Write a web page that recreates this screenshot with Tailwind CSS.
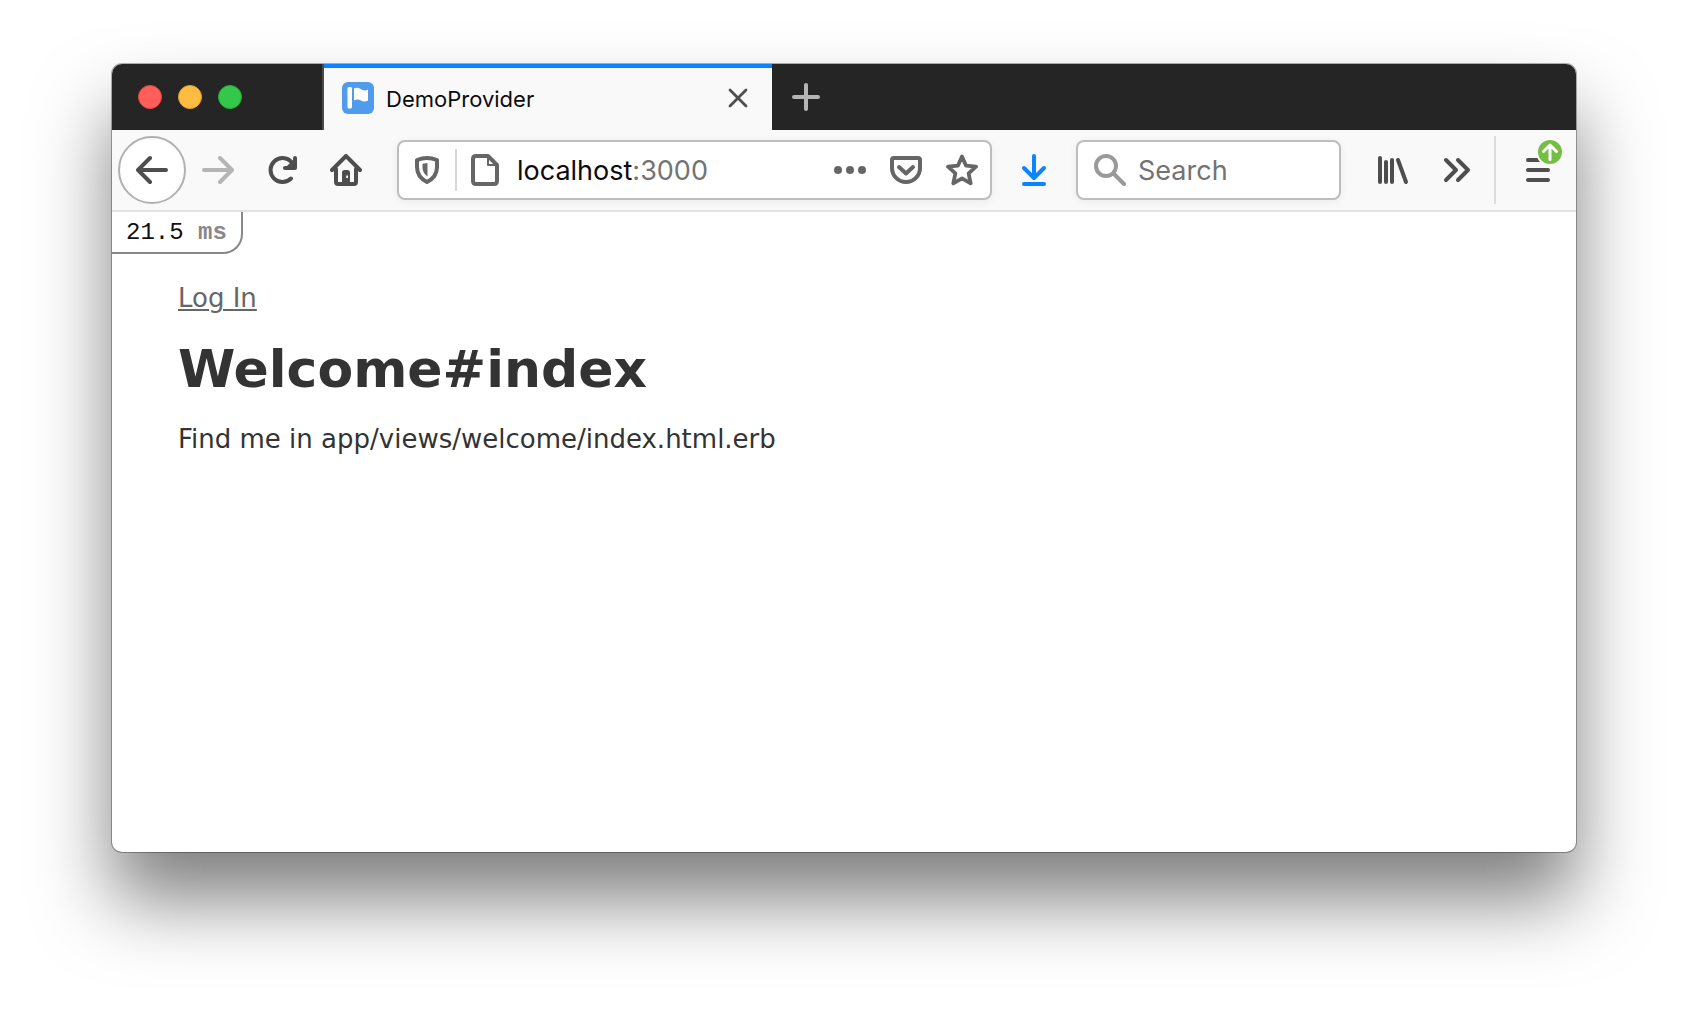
<!DOCTYPE html>
<html lang="en">
<head>
<meta charset="utf-8">
<title>DemoProvider</title>
<script src="https://cdn.jsdelivr.net/npm/@tailwindcss/browser@4"></script>
</head>
<body class="flex min-h-screen flex-col bg-white px-28 pt-16 pb-40 font-['Inter',sans-serif]">
<div class="flex flex-1 flex-col overflow-hidden rounded-[10px] bg-white shadow-[0_0_0_1px_rgba(0,0,0,0.3),0_48px_76px_rgba(0,0,0,0.5)]">

  <!-- Tab strip -->
  <header class="flex h-[66px] shrink-0 bg-[#252525]">
    <div class="flex w-[212px] items-center gap-4 border-r-2 border-[#4a4a4a] pl-[26px]">
      <button aria-label="Close window" class="size-6 rounded-full border border-[#e2443f] bg-[#fe5f5a]"></button>
      <button aria-label="Minimize window" class="size-6 rounded-full border border-[#dfa032] bg-[#febc40]"></button>
      <button aria-label="Zoom window" class="size-6 rounded-full border border-[#27aa35] bg-[#34c84a]"></button>
    </div>
    <div class="flex w-md items-center border-t-4 border-[#0a84ff] bg-[#f9f9fa] pr-4 pb-0.5 pl-[18px]">
      <svg class="size-8 shrink-0" viewBox="0 0 32 32" aria-hidden="true">
        <rect width="32" height="32" rx="6" fill="#509bec"/>
        <rect x="5.5" y="5" width="4.500" height="21.500" rx="1.500" fill="#fff"/>
        <path d="M12 6.500C15 5 17 6 19.500 7.500S24 8.500 26 7.500V18.500C23 20 21 19.500 18.500 18.200S14 17.500 12 18.500Z" fill="#fff"/>
      </svg>
      <span class="ml-3 flex-1 pt-0.5 text-[22px] leading-8 text-[#0c0c0d]">DemoProvider</span>
      <button aria-label="Close tab" class="flex size-9 items-center justify-center">
        <svg class="size-6" viewBox="0 0 24 24" fill="none" stroke="#4e4e4f" stroke-width="2.800" stroke-linecap="round"><path d="M4 4l16 16M20 4L4 20"/></svg>
      </button>
    </div>
    <button aria-label="New tab" class="flex w-[68px] items-center justify-center">
      <svg class="size-8" viewBox="0 0 32 32" fill="none" stroke="#b5b5b5" stroke-width="4" stroke-linecap="round"><path d="M16 4v24M4 16h24"/></svg>
    </button>
  </header>

  <!-- Navigation toolbar -->
  <nav class="flex h-[82px] shrink-0 items-center border-b-2 border-[#e1e1e2] bg-[#f9f9fa] pl-1.5 text-[#4e4e4f]">
    <button aria-label="Back" class="flex size-[68px] items-center justify-center rounded-full border-2 border-[#b1b1b2] bg-white">
      <svg class="size-8" viewBox="0 0 32 32" fill="none" stroke="currentColor" stroke-width="4" stroke-linecap="round" stroke-linejoin="round"><path d="M30 16H3M14 4L2 16l12 12"/></svg>
    </button>
    <button aria-label="Forward" disabled class="flex h-16 w-16 items-center justify-center text-[#b5b5b6]">
      <svg class="size-8" viewBox="0 0 32 32" fill="none" stroke="currentColor" stroke-width="4" stroke-linecap="round" stroke-linejoin="round"><path d="M2 16h27M18 4l12 12-12 12"/></svg>
    </button>
    <button aria-label="Reload" class="flex h-16 w-16 items-center justify-center">
      <svg class="size-8" viewBox="0 0 32 32" fill="none" stroke="currentColor" stroke-width="4" stroke-linecap="round" stroke-linejoin="round"><path d="M25 24.500A12 12 0 1 1 25.500 8"/><path d="M29 4v10H19z" stroke="none" fill="currentColor"/><path d="M29 4v10H19"/></svg>
    </button>
    <button aria-label="Home" class="flex h-16 w-16 items-center justify-center">
      <svg class="size-8" viewBox="0 0 32 32" fill="none" stroke="currentColor" stroke-width="4" stroke-linecap="round" stroke-linejoin="round"><path d="M2 16L16 2l14 14M6 15v13q0 2 2 2h16q2 0 2-2V15"/><path d="M12 30V18.500q0-2.500 2.500-2.500h3q2.500 0 2.500 2.500V30zM16.200 21.500h1.800v2.500h-1.800z" stroke="none" fill="currentColor" fill-rule="evenodd"/></svg>
    </button>

    <div class="ml-[19px] flex h-[60px] min-w-0 flex-1 items-center rounded-lg border-2 border-[#bdbdbe] bg-white text-[#666667] shadow-[0_2px_8px_rgba(0,0,0,0.06)]">
      <button aria-label="Tracking protection" class="flex w-14 items-center justify-center">
        <svg class="size-8" viewBox="0 0 32 32" fill="none" stroke="currentColor" stroke-width="4" stroke-linejoin="round"><path d="M16 4c4 0 7 .8 10 2v7c0 7-4 12-10 15C10 25 6 20 6 13V6c3-1.200 6-2 10-2z"/><path d="M16.500 9v13.500c-3-2-5-5-5-9V9.800z" stroke="none" fill="currentColor"/></svg>
      </button>
      <span class="h-[42px] w-0.5 bg-[#d7d7db]"></span>
      <button aria-label="Site information" class="flex w-14 items-center justify-center">
        <svg class="size-8" viewBox="0 0 32 32" fill="none" stroke="currentColor" stroke-width="4" stroke-linejoin="round"><path d="M7 2h12l9 9v16q0 3-3 3H7q-3 0-3-3V5q0-3 3-3z"/><path d="M19 3v8h8" stroke-width="2"/></svg>
      </button>
      <div class="ml-1 flex-1 pt-0.5 text-[27px] leading-9 text-[#737373]" role="textbox" aria-label="Address"><span class="text-[#0c0c0d]">localhost</span>:3000</div>
      <button aria-label="Page actions" class="flex w-14 items-center justify-center">
        <svg class="size-8" viewBox="0 0 32 32" fill="currentColor"><circle cx="4" cy="16" r="4"/><circle cx="16" cy="16" r="4"/><circle cx="28" cy="16" r="4"/></svg>
      </button>
      <button aria-label="Save to Pocket" class="flex w-14 items-center justify-center">
        <svg class="size-8" viewBox="0 0 32 32" fill="none" stroke="currentColor" stroke-width="4" stroke-linecap="round" stroke-linejoin="round"><path d="M4 4h24q2 0 2 2v8a14 14 0 0 1-28 0V6q0-2 2-2z"/><path d="M9 13l7 6.500 7-6.500"/></svg>
      </button>
      <button aria-label="Bookmark this page" class="flex w-14 items-center justify-center">
        <svg class="size-8" viewBox="0 0 32 32" fill="none" stroke="currentColor" stroke-width="3.800" stroke-linejoin="round"><path d="M16 2.500l4.100 9.200 9.900 1-7.400 6.700 2.100 10L16 24.300l-8.700 5.100 2.100-10L2 12.700l9.900-1z"/></svg>
      </button>
    </div>

    <button aria-label="Downloads" class="flex h-16 w-[84px] items-center justify-center text-[#0a84ff]">
      <svg class="size-8" viewBox="0 0 32 32" fill="none" stroke="currentColor" stroke-width="4" stroke-linecap="round" stroke-linejoin="round"><path d="M16 2v22M6 14l10 10 10-10M6 30h20"/></svg>
    </button>

    <label class="flex h-[60px] w-[265px] items-center gap-3 rounded-lg border-2 border-[#bdbdbe] bg-white pl-4 shadow-[0_2px_8px_rgba(0,0,0,0.06)]">
      <svg class="size-8 shrink-0" viewBox="0 0 32 32" fill="none" stroke="#999" stroke-width="4" stroke-linecap="round" aria-hidden="true"><circle cx="12" cy="12" r="10"/><path d="M20 20l10 10"/></svg>
      <input type="text" aria-label="Search" placeholder="Search" class="min-w-0 flex-1 pt-0.5 text-[27px] leading-9 outline-none placeholder:text-[#737373]">
    </label>

    <button aria-label="Library" class="ml-5 flex h-16 w-16 items-center justify-center">
      <svg class="size-8" viewBox="0 0 32 32" fill="none" stroke="currentColor" stroke-width="4" stroke-linecap="round"><path d="M3 4v24M9 8v20M15 6v22M21 6l8 22"/></svg>
    </button>
    <button aria-label="More tools" class="flex h-16 w-16 items-center justify-center">
      <svg class="size-8" viewBox="0 0 32 32" fill="none" stroke="currentColor" stroke-width="4" stroke-linecap="round" stroke-linejoin="round"><path d="M5 6l10 10L5 26M17 6l10 10-10 10"/></svg>
    </button>
    <span class="ml-[5px] h-[68px] w-0.5 bg-[#dcdcdd]"></span>
    <button aria-label="Open menu, update available" class="flex h-16 w-20 items-center justify-center pl-1">
      <span class="relative">
        <svg class="size-8" viewBox="0 0 32 32" fill="none" stroke="currentColor" stroke-width="4" stroke-linecap="round"><path d="M6 6h20M6 16h20M6 26h20"/></svg>
        <svg class="absolute -top-4 left-3.5 size-7" viewBox="0 0 28 28" fill="none"><circle cx="14" cy="14" r="14" fill="#f9f9fa"/><circle cx="14" cy="14" r="12" fill="#74bf43"/><path d="M14 21.500V8M7.500 13.500L14 7l6.500 6.500" stroke="#fff" stroke-width="3" stroke-linecap="round" stroke-linejoin="round"/></svg>
      </span>
    </button>
  </nav>

  <!-- Page -->
  <main class="relative flex-1 px-[66px] pt-[68px] font-['Verdana','DejaVu_Sans',sans-serif] text-[26px] leading-9 text-[#333]">
    <div class="absolute top-0 left-0 flex h-[42px] items-center rounded-br-[20px] border-r-2 border-b-2 border-[#888] px-3.5 pt-0.5 font-['Liberation_Mono',monospace] text-[24px] leading-9 text-[#111]">21.5&nbsp;<span class="font-bold text-[#888]">ms</span></div>
    <a href="#" class="text-[#666] underline decoration-2 underline-offset-2">Log In</a>
    <h1 class="mt-[35px] text-[52px] leading-9 font-bold">Welcome#index</h1>
    <p class="mt-[34px]">Find me in app/views/welcome/index.html.erb</p>
  </main>
</div>
</body>
</html>
